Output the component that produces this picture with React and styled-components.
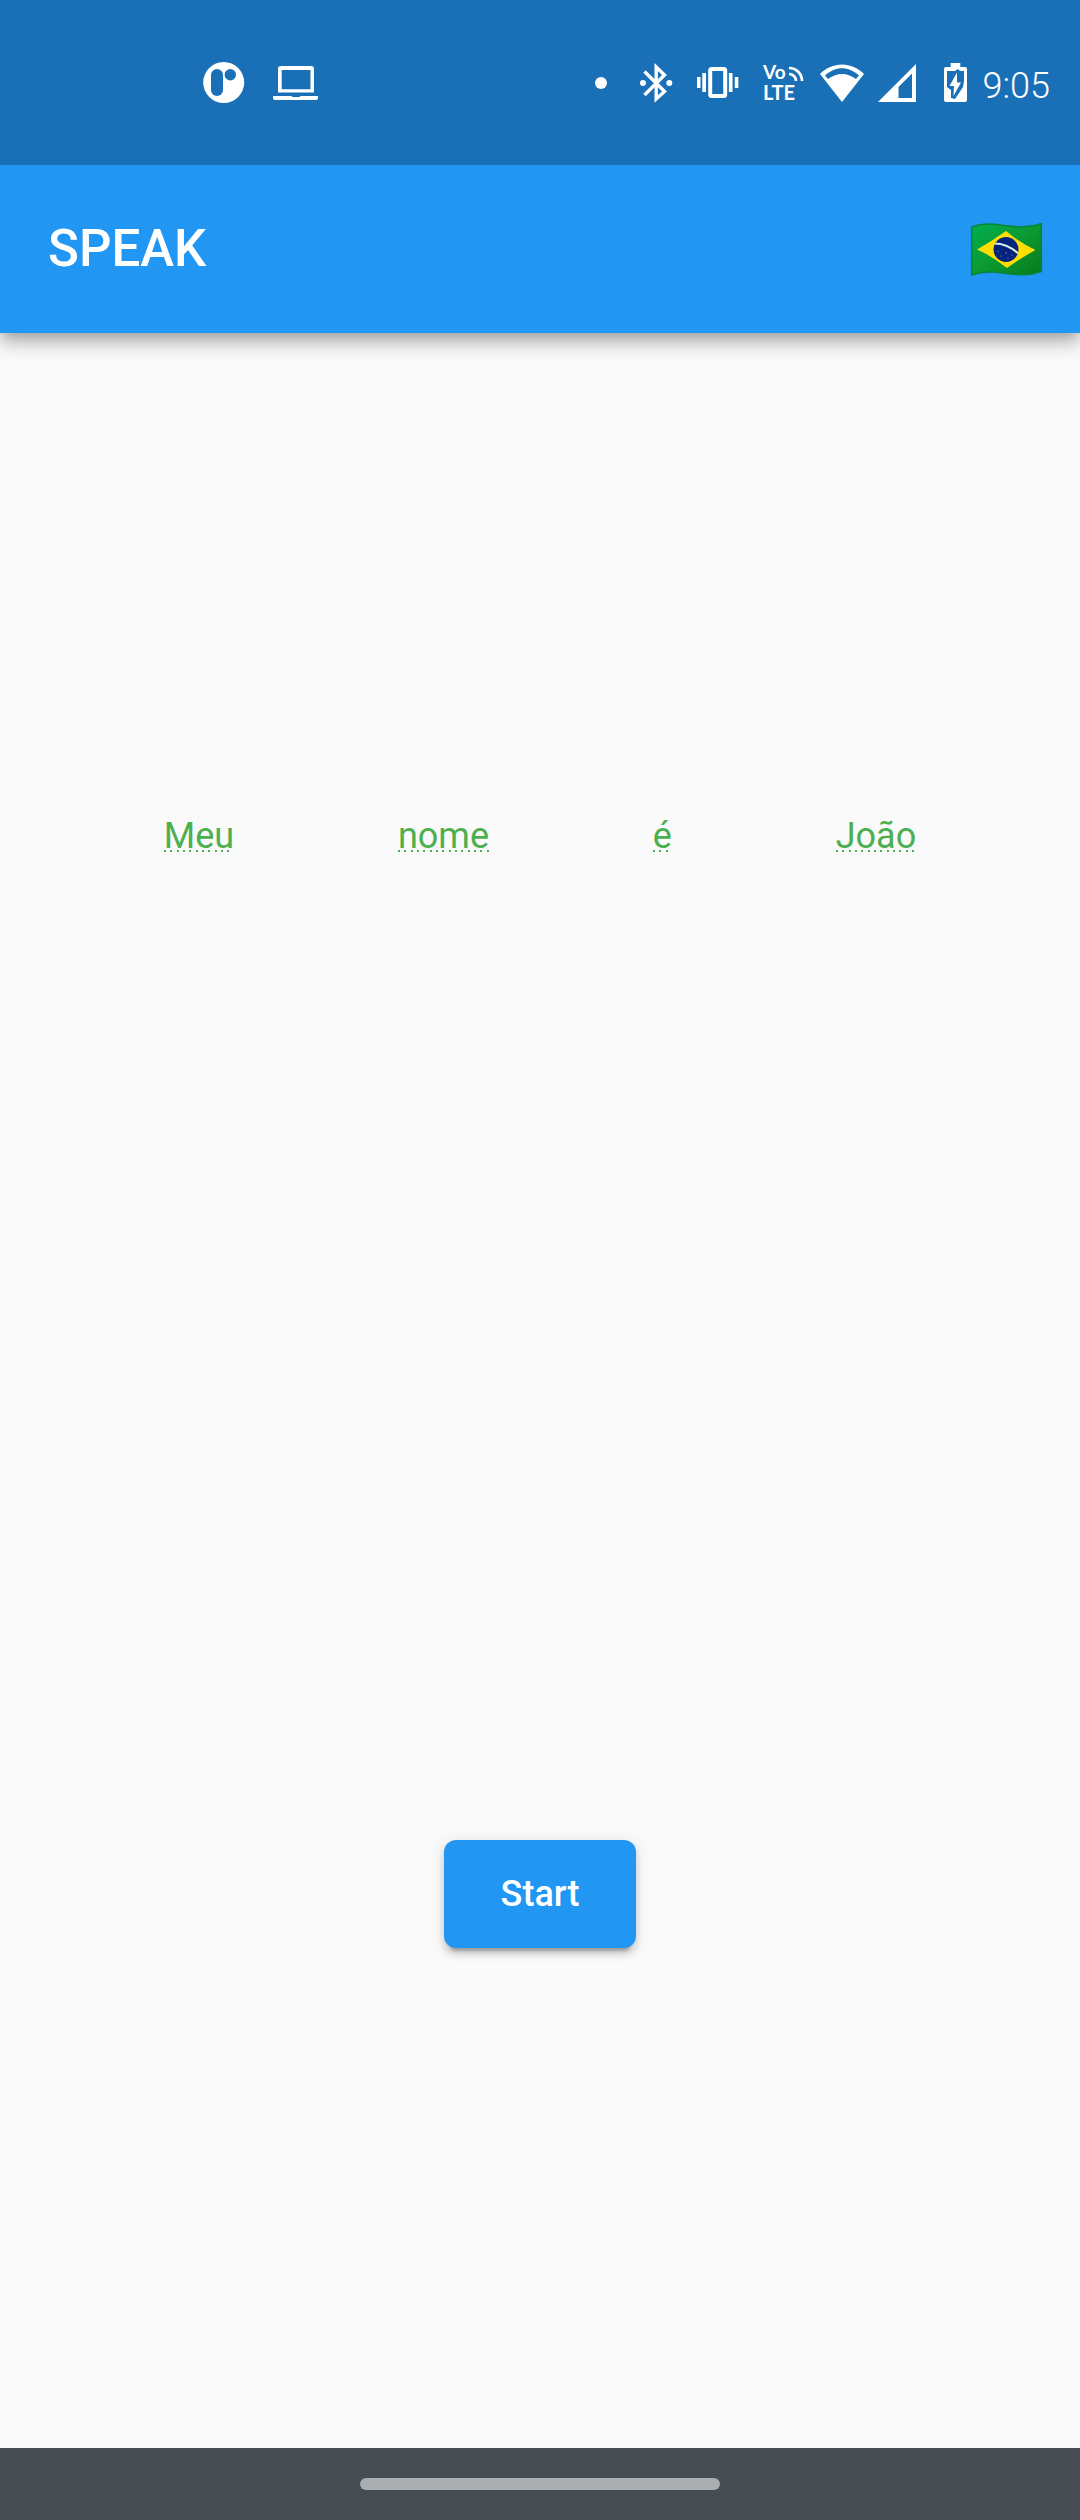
import React from 'react';
import styled, { createGlobalStyle } from 'styled-components';

const GlobalStyle = createGlobalStyle`
  *, *::before, *::after { box-sizing: border-box; }
  body {
    margin: 0;
    background: #fafafa;
    font-family: Roboto, "Noto Sans", sans-serif;
  }
`;

const Screen = styled.div`
  display: flex;
  flex-direction: column;
  min-height: 100vh;
`;

const StatusBar = styled.div`
  position: relative;
  z-index: 1;
  display: flex;
  align-items: center;
  justify-content: space-between;
  height: 165px;
  padding: 0 30px 0 203px;
  background: #1a70b7;
  color: #fff;
`;

const IconGroup = styled.div`
  display: flex;
  align-items: center;
  gap: ${(p) => p.$gap}px;
`;

const Glyph = styled.svg`
  display: block;
  flex: none;
  overflow: visible;
`;

const Clock = styled.time`
  padding-top: 6px;
  font-weight: 300;
  font-size: 36px;
  line-height: 42px;
`;

const AppBar = styled.header`
  position: relative;
  display: flex;
  align-items: center;
  justify-content: space-between;
  height: 168px;
  padding: 0 38px 0 48px;
  background: #2196f3;
  color: #fff;
  box-shadow: 0 6px 12px -3px rgba(0, 0, 0, 0.2), 0 12px 15px rgba(0, 0, 0, 0.14), 0 3px 30px rgba(0, 0, 0, 0.12);
`;

const Title = styled.h1`
  margin: 0;
  font-weight: 500;
  font-size: 51px;
  line-height: 60px;
`;

const FlagButton = styled.button`
  display: flex;
  padding: 0;
  border: 0;
  background: none;
  cursor: pointer;
`;

const Content = styled.main`
  flex: 1;
  display: flex;
  flex-direction: column;
  align-items: center;
  justify-content: space-around;
`;

const Sentence = styled.div`
  align-self: stretch;
  display: flex;
  justify-content: space-evenly;
`;

const Word = styled.span`
  color: #4caf50;
  font-size: 36px;
  line-height: 42px;
  background-image: linear-gradient(
    to right,
    currentColor 0 2px, transparent 2px 6px,
    currentColor 6px 8px, transparent 8px 13px,
    currentColor 13px 15px, transparent 15px 19px
  );
  background-size: 19px 2px;
  background-position: left bottom 5px;
  background-repeat: repeat-x;
`;

const TapTarget = styled.div`
  display: flex;
  align-items: center;
  height: 144px;
`;

const StartButton = styled.button`
  min-width: 192px;
  height: 108px;
  padding: 0 48px;
  border: 0;
  border-radius: 12px;
  background: #2196f3;
  color: #fff;
  font-family: inherit;
  font-weight: 500;
  font-size: 36px;
  line-height: 42px;
  cursor: pointer;
  box-shadow: 0 9px 3px -6px rgba(0, 0, 0, 0.2), 0 6px 6px rgba(0, 0, 0, 0.14), 0 3px 15px rgba(0, 0, 0, 0.12);
`;

const NavBar = styled.footer`
  display: flex;
  align-items: center;
  justify-content: center;
  height: 72px;
  background: #454d52;
`;

const HomeHandle = styled.div`
  width: calc(100% / 3);
  height: 12px;
  border-radius: 6px;
  background: #aaaeb1;
`;

const Icon = ({ w, h, children }) => (
  <Glyph width={w} height={h} viewBox={`0 0 ${w} ${h}`} fill="#fff" aria-hidden="true">
    {children}
  </Glyph>
);

const AppIcon = () => (
  <Icon w={42} h={41}>
    <circle cx="20.7" cy="20.5" r="20.5" />
    <rect x="8" y="7" width="12" height="27" rx="6" fill="#1a70b7" />
    <circle cx="27.3" cy="12.8" r="5.7" fill="#1a70b7" />
  </Icon>
);

const LaptopIcon = () => (
  <Icon w={45} h={34}>
    <path fillRule="evenodd" d="M8 0H38Q41 0 41 3V26.5H5V3Q5 0 8 0ZM8.7 4V23.3H37.5V4Z" />
    <path d="M0 30H19V31H27V30H45V32Q45 34 43 34H2Q0 34 0 32Z" />
  </Icon>
);

const DotIcon = () => (
  <Icon w={12} h={12}>
    <circle cx="6" cy="6" r="6" />
  </Icon>
);

const BluetoothIcon = () => (
  <Icon w={33} h={38}>
    <path d="M4.5 7.5L24.5 27.5L16.2 35V3L24.5 11L4.5 31" fill="none" stroke="#fff" strokeWidth="3.4" />
    <circle cx="3" cy="19" r="3" />
    <circle cx="29.3" cy="19" r="3" />
  </Icon>
);

const VibrateIcon = () => (
  <Icon w={42} h={31}>
    <rect x="13.2" y="2" width="15" height="27" rx="1.5" fill="none" stroke="#fff" strokeWidth="4" />
    <path d="M0 10H3.5V21H0ZM5.3 6H9V25H5.3ZM31.9 6H35.5V25H31.9ZM37.8 10H41.3V21H37.8Z" />
  </Icon>
);

const VolteIcon = () => (
  <Icon w={41} h={36}>
    <g fontFamily="Lato, sans-serif" fontWeight="700">
      <text x="0" y="14" fontSize="19">Vo</text>
      <text x="0" y="35" fontSize="20">LTE</text>
    </g>
    <path d="M26 3A13 13 0 0 1 39 16M26 9A7 7 0 0 1 33 16" fill="none" stroke="#fff" strokeWidth="2.7" />
  </Icon>
);

const WifiIcon = () => (
  <Icon w={44} h={38}>
    <path
      fillRule="evenodd"
      d="M22 38L0 10C6 4 14 0.5 22 0.5S38 4 44 10ZM5 11.5L8 15C12 12 17 10 22 10S32 12 36 15L39 11.5C34 7 28 4.3 22 4.3S10 7 5 11.5Z"
    />
  </Icon>
);

const SignalIcon = () => (
  <Icon w={38} h={38}>
    <path fillRule="evenodd" d="M0 38L38 0V38ZM20.5 34H34V9.5L20.5 23Z" />
  </Icon>
);

const BatteryIcon = () => (
  <Icon w={23} h={39}>
    <path d="M6.7 0H16.3V4H21Q23 4 23 6V37Q23 39 21 39H2Q0 39 0 37V6Q0 4 2 4H6.7Z" />
    <path d="M3 8H11L14 6L16 8H20V18L19 24L11 36L7 35V27L3 24Z" fill="#1a70b7" />
    <path d="M13 9.5L5.5 23H10L9.5 33L17 19.5H13Z" />
  </Icon>
);

const BrazilFlag = () => (
  <Glyph width="71" height="53" viewBox="0 0 71 53" aria-hidden="true">
    <defs>
      <linearGradient id="field" x1="0" y1="0" x2="1" y2="1">
        <stop offset="0" stopColor="#00b050" />
        <stop offset="0.5" stopColor="#0c9a30" />
        <stop offset="1" stopColor="#067a1c" />
      </linearGradient>
      <clipPath id="globe">
        <circle cx="35" cy="26.5" r="12.5" />
      </clipPath>
    </defs>
    <path
      d="M0.7 4C24 -5 43 10 70.3 0.7V48.5C45 58 26 43 0.7 52Z"
      fill="url(#field)"
      stroke="#0a8438"
      strokeWidth="1.5"
    />
    <path d="M6 26.5Q21 18 35 8Q49 20 64.5 27Q50 35 36 45Q21 33 6 26.5Z" fill="#ffde00" />
    <circle cx="35" cy="26.5" r="12.5" fill="#06247e" />
    <g clipPath="url(#globe)">
      <path d="M22 20.5Q36 20 48 31" fill="none" stroke="#d5f0e4" strokeWidth="2" />
    </g>
    <g fill="#8fa3d8">
      <circle cx="27" cy="28" r="0.6" />
      <circle cx="30" cy="33" r="0.6" />
      <circle cx="35" cy="30" r="0.7" />
      <circle cx="37" cy="35" r="0.6" />
      <circle cx="41" cy="32" r="0.6" />
    </g>
  </Glyph>
);

const WORDS = ['Meu', 'nome', 'é', 'João'];

export default function App() {
  return (
    <Screen lang="pt-BR">
      <GlobalStyle />
      <StatusBar>
        <IconGroup $gap={28}>
          <AppIcon />
          <LaptopIcon />
        </IconGroup>
        <IconGroup $gap={16}>
          <IconGroup $gap={24}>
            <IconGroup $gap={33}>
              <DotIcon />
              <BluetoothIcon />
            </IconGroup>
            <VibrateIcon />
            <VolteIcon />
          </IconGroup>
          <IconGroup $gap={28}>
            <IconGroup $gap={14}>
              <WifiIcon />
              <SignalIcon />
            </IconGroup>
            <BatteryIcon />
          </IconGroup>
          <Clock>9:05</Clock>
        </IconGroup>
      </StatusBar>
      <AppBar>
        <Title>SPEAK</Title>
        <FlagButton type="button" aria-label="Português (Brasil)">
          <BrazilFlag />
        </FlagButton>
      </AppBar>
      <Content>
        <Sentence>
          {WORDS.map((word) => (
            <Word key={word}>{word}</Word>
          ))}
        </Sentence>
        <TapTarget>
          <StartButton type="button">Start</StartButton>
        </TapTarget>
      </Content>
      <NavBar>
        <HomeHandle />
      </NavBar>
    </Screen>
  );
}
